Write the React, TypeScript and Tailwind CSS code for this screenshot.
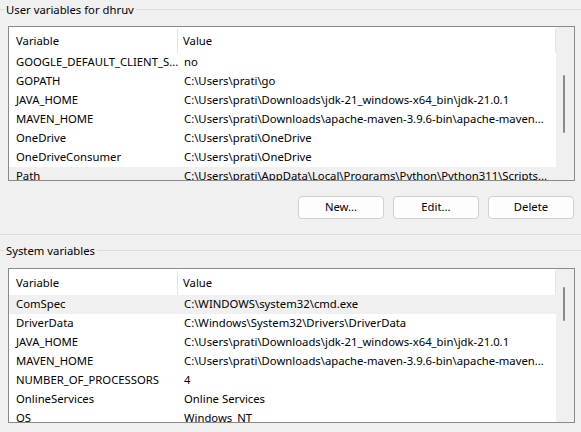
import React from 'react';

type Row = { name: string; value: string };

const userVars: Row[] = [
  { name: 'GOOGLE_DEFAULT_CLIENT_S...', value: 'no' },
  { name: 'GOPATH', value: 'C:\\Users\\prati\\go' },
  { name: 'JAVA_HOME', value: 'C:\\Users\\prati\\Downloads\\jdk-21_windows-x64_bin\\jdk-21.0.1' },
  { name: 'MAVEN_HOME', value: 'C:\\Users\\prati\\Downloads\\apache-maven-3.9.6-bin\\apache-maven...' },
  { name: 'OneDrive', value: 'C:\\Users\\prati\\OneDrive' },
  { name: 'OneDriveConsumer', value: 'C:\\Users\\prati\\OneDrive' },
  { name: 'Path', value: 'C:\\Users\\prati\\AppData\\Local\\Programs\\Python\\Python311\\Scripts...' },
];

const systemVars: Row[] = [
  { name: 'ComSpec', value: 'C:\\WINDOWS\\system32\\cmd.exe' },
  { name: 'DriverData', value: 'C:\\Windows\\System32\\Drivers\\DriverData' },
  { name: 'JAVA_HOME', value: 'C:\\Users\\prati\\Downloads\\jdk-21_windows-x64_bin\\jdk-21.0.1' },
  { name: 'MAVEN_HOME', value: 'C:\\Users\\prati\\Downloads\\apache-maven-3.9.6-bin\\apache-maven...' },
  { name: 'NUMBER_OF_PROCESSORS', value: '4' },
  { name: 'OnlineServices', value: 'Online Services' },
  { name: 'OS', value: 'Windows_NT' },
];

const GroupTitle: React.FC<{ title: string }> = ({ title }) => (
  <div className="flex items-center h-[19px]">
    <div className="w-[4px] h-px bg-[#dcdcdc]" />
    <span className="px-[2px] leading-[19px] text-black">{title}</span>
    <div className="flex-1 h-px bg-[#dcdcdc]" />
  </div>
);

// thumb position differs per list, so it comes in as props
const VarList: React.FC<{ rows: Row[]; selected: number; thumbTop: number; thumbHeight: number }> = ({
  rows,
  selected,
  thumbTop,
  thumbHeight,
}) => (
  <div className="ml-[8px] w-[567px] h-[155px] border border-[#8a8a8a] bg-white flex overflow-hidden">
    <div className="w-[547px] flex flex-col overflow-hidden">
      <div className="flex h-[26px] shrink-0 pt-[2px]">
        <div className="w-[169px] h-full flex items-center pl-[7px] border-r border-[#e5e5e5]">Variable</div>
        <div className="flex-1 h-full flex items-center pl-[5px] border-r border-[#e5e5e5]">Value</div>
      </div>
      {rows.map((r, i) => (
        <div
          key={r.name}
          className={`flex h-[19px] shrink-0 items-center whitespace-nowrap ${i === selected ? 'bg-[#f0f0f0]' : ''}`}
        >
          <div className="w-[169px] pl-[7px] overflow-hidden">{r.name}</div>
          <div className="flex-1 pl-[6px] overflow-hidden">{r.value}</div>
        </div>
      ))}
    </div>
    <div className="w-[18px] bg-[#f0f0f0] relative">
      <div
        className="absolute left-[7px] w-[2px] bg-[#8a8a8a] rounded-full"
        style={{ top: thumbTop, height: thumbHeight }}
      />
    </div>
  </div>
);

const Button: React.FC<{ label: string }> = ({ label }) => (
  <button className="w-[86px] h-[23px] bg-[#fdfdfd] border border-[#d0d0d0] rounded-[4px] text-black">
    {label}
  </button>
);

export default function App() {
  return (
    <div className="w-[581px] h-[432px] bg-[#f0f0f0] overflow-hidden text-[11.3px] text-black font-['Noto_Sans','Open_Sans',sans-serif]">
      <GroupTitle title="User variables for dhruv" />
      <div className="mt-[7px]">
        <VarList rows={userVars} selected={6} thumbTop={48} thumbHeight={58} />
      </div>
      <div className="flex justify-end gap-[9px] pr-[7px] mt-[15px]">
        <Button label="New..." />
        <Button label="Edit..." />
        <Button label="Delete" />
      </div>
      <div className="mt-[15px] h-px bg-[#dcdcdc]" />
      <div className="mt-[6px]">
        <GroupTitle title="System variables" />
      </div>
      <div className="mt-[8px]">
        <VarList rows={systemVars} selected={0} thumbTop={18} thumbHeight={34} />
      </div>
    </div>
  );
}
